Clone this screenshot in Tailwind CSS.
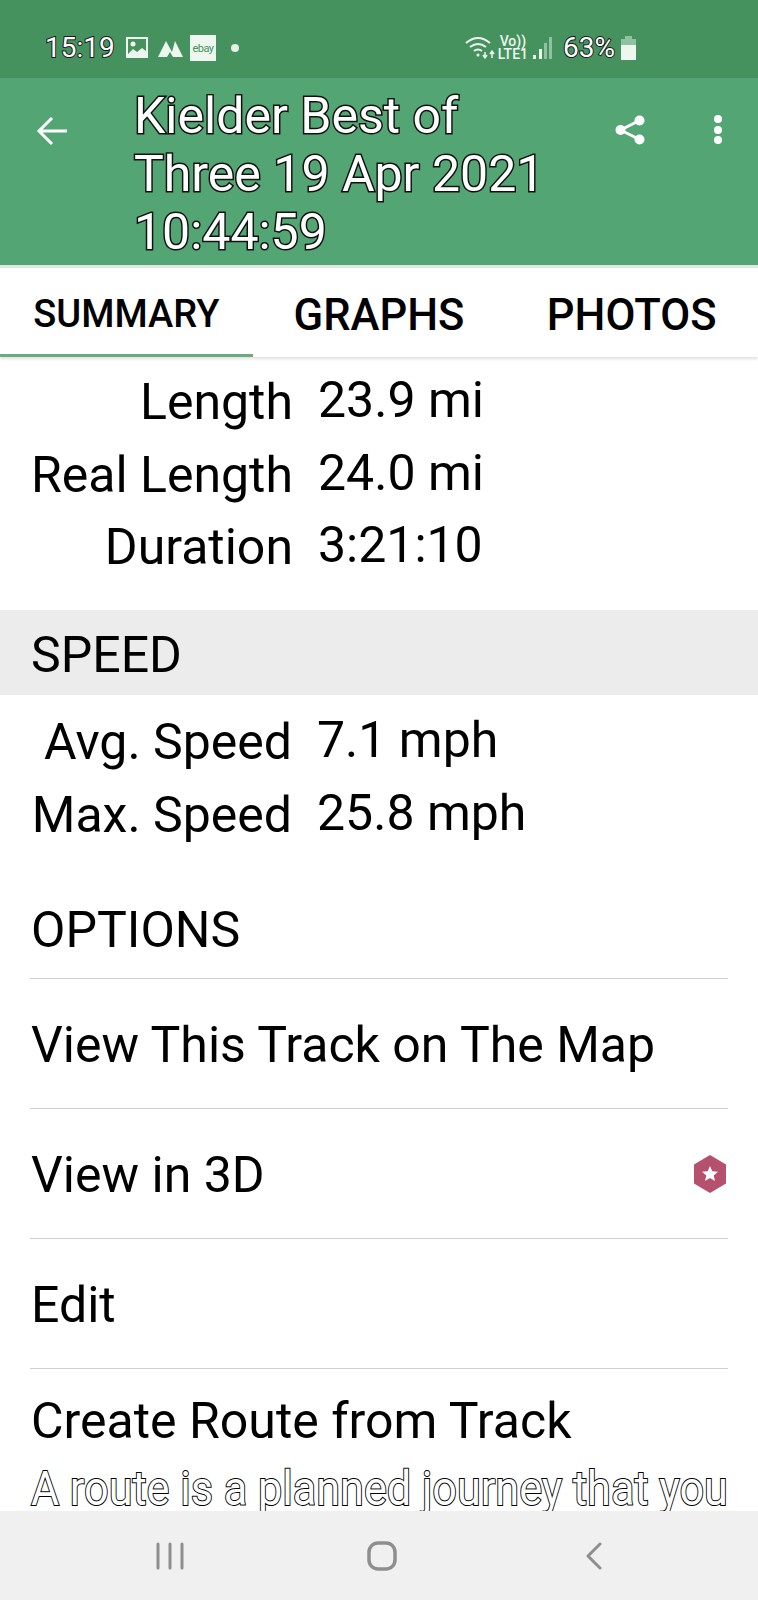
<!DOCTYPE html>
<html lang="en">
  <head>
    <meta charset="UTF-8" />
    <meta name="viewport" content="width=device-width, initial-scale=1.0" />
    <script src="https://cdn.jsdelivr.net/npm/@tailwindcss/browser@4"></script>
    <title>Track Details</title>
  </head>
  <body class="bg-white">
    <div class="w-[758px] h-[1600px] flex flex-col overflow-hidden font-['Roboto',sans-serif] text-black">
      <!-- status bar -->
      <div class="h-[78px] shrink-0 bg-[#46925f] flex items-center justify-between pl-[45px] pr-[122px] pt-[18px] text-white">
        <div class="flex items-center">
          <span class="text-[28px] leading-none w-[81px] [-webkit-text-stroke:2px_#1a1a1a] [paint-order:stroke_fill]">15:19</span>
          <svg class="w-[22px] h-[22px]" viewBox="0 0 22 22"><path fill="#eef6f0" fill-rule="evenodd" d="M0 0h22v21H0z M2 2v17h18V2z"/><circle cx="7" cy="7" r="2.500" fill="#eef6f0"/><path fill="#eef6f0" d="M2 17l5-5 4 3 5-4 4 3v5H2z"/></svg>
          <svg class="w-[25px] h-[17px] ml-[10px]" viewBox="0 0 25 17"><path fill="#eef6f0" d="M0 17 8 1l6 11 3-11 8 16H15l-3-5-3 5z"/></svg>
          <div class="w-[26px] h-[26px] ml-[7px] bg-[#eef6f0] flex items-center justify-center text-[11px] tracking-tighter leading-none text-[#46925f]">ebay</div>
          <div class="w-[8px] h-[8px] ml-[15px] rounded-full bg-[#e4f0e8]"></div>
        </div>
        <div class="flex items-center">
          <svg class="w-[30px] h-[24px]" viewBox="0 0 30 24" fill="none" stroke="#eef6f0" stroke-width="2"><path d="M1 7q12-10 24 0"/><path d="M5 11q8-6 16 0"/><path d="M9 15q4-3 8 0"/><circle cx="13" cy="19" r="1.500" fill="#eef6f0" stroke="none"/><path stroke-width="1.500" d="M20 16v6M18 19l2 3 2-3M27 22v-6M25 18l2-3 2 3"/></svg>
          <div class="ml-[3px] flex flex-col items-center text-[#eef6f0] text-[14px] leading-[13px] font-medium">
            <span>Vo))</span>
            <span>LTE1</span>
          </div>
          <svg class="w-[20px] h-[24px] ml-[5px]" viewBox="0 0 20 24"><rect x="0" y="19" width="3" height="4" fill="#eef6f0"/><rect x="6" y="13" width="3" height="10" fill="#eef6f0"/><rect x="11" y="7" width="3" height="16" fill="#8fc2a0"/><rect x="16" y="1" width="3" height="22" fill="#8fc2a0"/></svg>
          <span class="text-[28px] leading-none ml-[10px] [-webkit-text-stroke:2px_#1a1a1a] [paint-order:stroke_fill]">63%</span>
          <svg class="w-[15px] h-[24px] ml-[6px]" viewBox="0 0 15 24"><path fill="#8fc2a0" d="M4 0h7v3h4v8H0V3h4z"/><path fill="#eef6f0" d="M0 9h15v15H0z"/></svg>
        </div>
      </div>

      <!-- toolbar -->
      <div class="h-[187px] shrink-0 bg-[#53a673] flex items-start relative">
        <svg class="w-[32px] h-[30px] ml-[36px] mt-[38px]" viewBox="0 0 32 30" fill="none" stroke="white" stroke-width="3"><path d="M31 15H3M16 2 3 15l13 13"/></svg>
        <h1 class="w-[420px] ml-[66px] mt-[9px] text-[50px] leading-[58px] text-white [-webkit-text-stroke:3px_#111] [paint-order:stroke_fill]">Kielder Best of Three 19 Apr 2021 10:44:59</h1>
        <svg class="w-[30px] h-[30px] ml-[61px] mt-[37px]" viewBox="0 0 30 30" fill="#fff"><circle cx="5.500" cy="15" r="5"/><circle cx="24.500" cy="5.500" r="5"/><circle cx="24.500" cy="24.500" r="5"/><path stroke="#fff" stroke-width="3" d="M5.500 15 24.500 5.500M5.500 15l19 9.500"/></svg>
        <div class="ml-[69px] mt-[37px] flex flex-col gap-[2.500px]">
          <div class="w-[8px] h-[8px] rounded-full bg-white"></div>
          <div class="w-[8px] h-[8px] rounded-full bg-white"></div>
          <div class="w-[8px] h-[8px] rounded-full bg-white"></div>
        </div>
      </div>

      <!-- tabs -->
      <div class="h-[92px] shrink-0 flex border-t-[3px] border-[#e4e4e4] shadow-[0_2px_3px_rgba(0,0,0,0.12)] relative">
        <div class="w-[253px] h-full flex items-center justify-center border-b-[3px] border-[#6baa83] text-[38px] font-medium pt-[7px]">SUMMARY</div>
        <div class="w-[253px] h-full flex items-center justify-center text-[43.500px] font-medium pt-[7px]">GRAPHS</div>
        <div class="w-[253px] h-full flex items-center justify-center text-[43.500px] font-medium pt-[7px]">PHOTOS</div>
      </div>

      <!-- scrolling content -->
      <div class="flex-1 min-h-0 overflow-hidden">
        <div class="pt-[9px] pb-[26.500px] text-[50px] leading-[72.500px]">
          <div class="flex"><span class="w-[293px] text-right">Length</span><span class="ml-[25px] -mt-[2px]">23.9 mi</span></div>
          <div class="flex"><span class="w-[293px] text-right">Real Length</span><span class="ml-[25px] -mt-[2px]">24.0 mi</span></div>
          <div class="flex"><span class="w-[293px] text-right">Duration</span><span class="ml-[25px] -mt-[2px]">3:21:10</span></div>
        </div>
        <div class="h-[85px] bg-[#ececec] flex items-center pl-[31px] pt-[5px] text-[50px]">SPEED</div>
        <div class="pt-[11px] text-[50px] leading-[72.500px]">
          <div class="flex"><span class="w-[292px] text-right">Avg. Speed</span><span class="ml-[25px] -mt-[2px]">7.1 mph</span></div>
          <div class="flex"><span class="w-[292px] text-right">Max. Speed</span><span class="ml-[25px] -mt-[2px]">25.8 mph</span></div>
        </div>
        <div class="mx-[30px] mt-[22px] text-[50px]">
          <div class="h-[106px] flex items-end pb-[18px] pl-[1px] border-b border-[#d0d0d0] leading-[60px]">OPTIONS</div>
          <div class="h-[130px] flex items-center pt-[4px] pl-[1px] border-b border-[#d0d0d0]">View This Track on The Map</div>
          <div class="h-[130px] flex items-center justify-between pt-[4px] pl-[1px] border-b border-[#d0d0d0]">
            <span>View in 3D</span>
            <svg class="w-[34px] h-[38px] mr-[1px] -mt-[4px]" viewBox="0 0 34 38"><path fill="#b5506f" d="M17 0l16 9.500v19L17 38 1 28.500v-19z"/><path fill="#fff" d="m17 11 2.300 5.200 5.700.5-4.300 3.700 1.300 5.600-5-3-5 3 1.300-5.600L9 16.700l5.700-.5z"/></svg>
          </div>
          <div class="h-[130px] flex items-center pt-[4px] pl-[1px] border-b border-[#d0d0d0]">Edit</div>
          <div class="pl-[1px] pt-[24px] leading-[56px] whitespace-nowrap">Create Route from Track</div>
          <div class="pl-[1px] pt-[12px] text-[48px] leading-[56px] whitespace-nowrap origin-left scale-x-[0.9] text-white [-webkit-text-stroke:2px_#000] [paint-order:stroke_fill]">A route is a planned journey that you</div>
        </div>
      </div>

      <!-- android nav bar -->
      <div class="h-[89px] shrink-0 bg-[#f0f0f0] flex items-start">
        <svg class="w-[28px] h-[28px] ml-[156px] mt-[31px]" viewBox="0 0 28 28" stroke="#8e8e8e" stroke-width="3" stroke-linecap="round"><path d="M2 2v24M14 2v24M26 2v24"/></svg>
        <svg class="w-[30px] h-[30px] ml-[183px] mt-[30px]" viewBox="0 0 30 30" fill="none" stroke="#8e8e8e" stroke-width="3.500"><rect x="2" y="2" width="26" height="26" rx="9"/></svg>
        <svg class="w-[18px] h-[28px] ml-[188px] mt-[31px]" viewBox="0 0 18 28" fill="none" stroke="#8e8e8e" stroke-width="3" stroke-linecap="round" stroke-linejoin="round"><path d="M15 2 3 14l12 12"/></svg>
      </div>
    </div>
  </body>
</html>
